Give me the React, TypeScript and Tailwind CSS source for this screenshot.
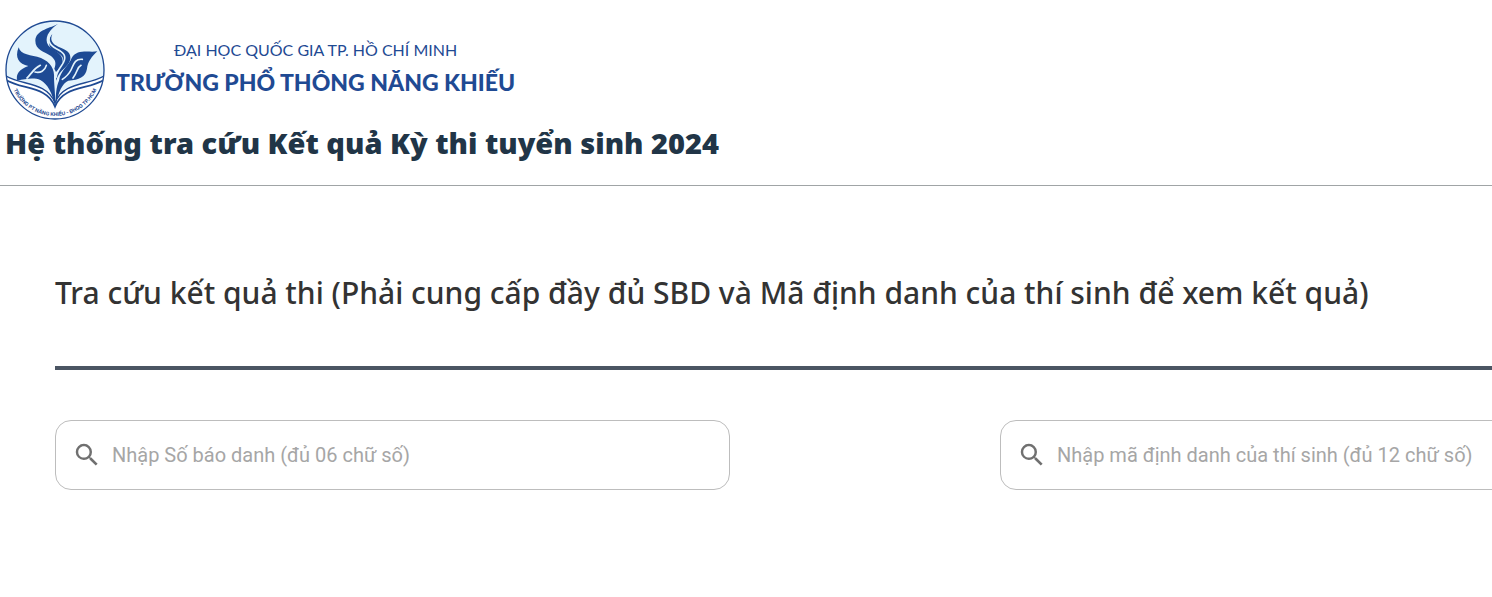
import { useId } from 'react';
import { MdSearch } from 'react-icons/md';

const SchoolLogo = () => {
  return (
    <svg viewBox="0 0 300 300" className="w-[100px] h-[100px] shrink-0" role="img" aria-label="Logo">
      <defs>
        <clipPath id="seal">
          <circle cx="150" cy="150" r="147" />
        </clipPath>
        <path id="sealText" d="M12 150 A138 138 0 0 0 288 150" />
      </defs>
      <circle cx="150" cy="150" r="147" fill="#e3f3fc" />
      {/* Open book */}
      <g clipPath="url(#seal)">
        <path d="M0 164 C50 196 126 180 150 244 C174 180 250 196 300 164 V300 H0 Z" fill="#ffffff" />
        <path d="M0 166 C50 198 122 182 150 248 C178 182 250 198 300 166" fill="none" stroke="#1f4a93" strokeWidth="4" />
        <path d="M0 178 C50 210 126 196 150 260 C174 196 250 210 300 178" fill="none" stroke="#1f4a93" strokeWidth="5" />
      </g>
      <circle cx="150" cy="150" r="147" fill="none" stroke="#1f4a93" strokeWidth="4" />
      {/* Flame shaped leaves */}
      <g fill="#1d4a94">
        <path d="M159 11 C140 24 92 28 91 62 C91 90 118 94 138 108 C152 120 154 130 148 146 L153 156 C166 142 176 134 172 116 C166 92 134 92 126 68 C120 46 138 26 159 11 Z" />
        <path d="M142 42 C134 60 142 72 160 80 C186 90 198 98 196 118 C192 142 160 150 154 182 C150 162 164 146 172 130 C182 104 158 100 142 90 C128 78 130 54 142 42 Z" />
        <path d="M41 82 C46 106 78 104 108 114 C136 126 150 148 147 176 C148 200 151 222 151 262 C142 218 128 192 106 180 C88 172 62 176 37 182 C31 162 44 148 70 138 C42 132 28 114 41 82 Z" />
        <path d="M277 94 C250 98 216 86 200 114 C192 136 166 152 162 182 C154 200 152 222 151 262 C160 214 172 190 190 182 C222 180 242 170 246 146 C248 126 260 110 277 94 Z" />
      </g>
      {/* Light veins that split the leaves */}
      <g fill="none" stroke="#e3f3fc" strokeWidth="5" strokeLinecap="round">
        <path d="M139 36 C124 60 134 76 154 86 C178 98 184 108 176 126 C170 140 156 150 153 172" />
        <path d="M66 174 C78 164 82 148 106 136" />
        <path d="M90 156 C106 160 120 152 124 136" />
        <path d="M232 118 C208 116 206 134 198 150 C192 162 184 170 172 178" />
        <path d="M228 136 C216 142 218 156 204 174" />
      </g>
      <text fontSize="15" className="fill-[#1f4a93] font-['Inter',sans-serif] font-bold">
        <textPath href="#sealText" startOffset="50%" textAnchor="middle">TRƯỜNG PT NĂNG KHIẾU - ĐHQG TP.HCM</textPath>
      </text>
    </svg>
  );
};

const SearchField = ({ placeholder }: { placeholder: string }) => {
  const id = useId();

  return (
    <div className="flex items-center gap-[10px] w-[675px] h-[70px] shrink-0 pl-4 pr-5 border border-[#bdbdbd] rounded-2xl">
      <label htmlFor={id} aria-label={placeholder}>
        <MdSearch className="w-[30px] h-[30px] text-[#707070]" />
      </label>
      <input
        id={id}
        type="text"
        placeholder={placeholder}
        className="flex-1 min-w-0 bg-transparent outline-none font-['Roboto',sans-serif] text-xl text-[#333333] placeholder:text-[#a6a6a6]"
      />
    </div>
  );
};

const App = () => {
  return (
    <div className="min-h-screen bg-white overflow-x-hidden">
      <header className="pt-5 pb-6 border-b border-[#a0a4a6]">
        <div className="flex items-center gap-[11px] px-[5px]">
          <SchoolLogo />
          <div className="flex flex-col items-center pb-1 text-[#1f4a93] whitespace-nowrap">
            <p className="font-['Lato',sans-serif] text-base leading-7">ĐẠI HỌC QUỐC GIA TP. HỒ CHÍ MINH</p>
            <p className="font-['Lato',sans-serif] font-black text-[23px] leading-9">TRƯỜNG PHỔ THÔNG NĂNG KHIẾU</p>
          </div>
        </div>
        <h1 className="px-[5px] pt-[5px] font-['Noto_Sans',sans-serif] font-black text-[29px] leading-9 text-[#213547]">
          Hệ thống tra cứu Kết quả Kỳ thi tuyển sinh 2024
        </h1>
      </header>

      <main className="pl-[55px] pt-20">
        <h2 className="pb-[46px] border-b-4 border-[#4b5563] font-['Noto_Sans',sans-serif] font-medium text-3xl leading-[54px] text-[#333333] whitespace-nowrap">
          Tra cứu kết quả thi (Phải cung cấp đầy đủ SBD và Mã định danh của thí sinh để xem kết quả)
        </h2>
        <form className="flex gap-[270px] pt-[50px]">
          <SearchField placeholder="Nhập Số báo danh (đủ 06 chữ số)" />
          <SearchField placeholder="Nhập mã định danh của thí sinh (đủ 12 chữ số)" />
        </form>
      </main>
    </div>
  );
};

export default App;
